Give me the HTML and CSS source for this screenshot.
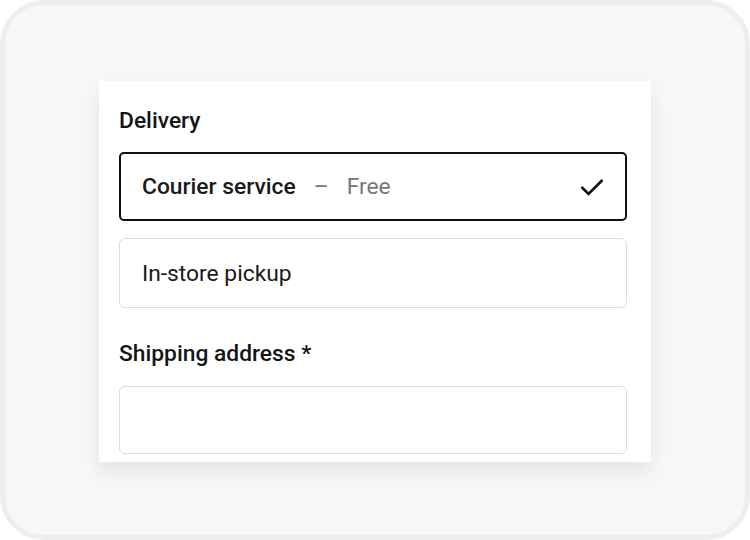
FILE: index.html
```html
<!DOCTYPE html>
<html lang="en">
<head>
    <meta charset="UTF-8">
    <title>Delivery</title>
    <link rel="stylesheet" href="styles.css">
</head>
<body>
    <div class="frame">
        <form class="card">
            <h2 class="section-title">Delivery</h2>

            <div class="options">
                <label class="option selected">
                    <span class="option-name">Courier service</span>
                    <span class="option-dash">–</span>
                    <span class="option-price">Free</span>
                    <svg class="check" viewBox="0 0 24 18" width="24" height="18">
                        <polyline points="1.5,9 8.5,16 22.5,2" fill="none" stroke="#111" stroke-width="2.6"/>
                    </svg>
                </label>
                <label class="option">
                    <span class="option-text">In-store pickup</span>
                </label>
            </div>

            <h2 class="section-title address-title">Shipping address *</h2>
            <div class="text-input"></div>
        </form>
    </div>
</body>
</html>
```

FILE: styles.css
```css
* {
    margin: 0;
    padding: 0;
    box-sizing: border-box;
}

body {
    font-family: Roboto, "Liberation Sans", sans-serif;
    background: #ffffff;
    color: #111;
}

.frame {
    width: 750px;
    height: 540px;
    border: 5px solid #eeeeee;
    border-radius: 44px;
    background: #f7f7f7;
    padding: 76px 94px 0 94px;
    overflow: hidden;
}

/* Карточка формы */
.card {
    width: 552px;
    height: 381px;
    background: #fff;
    padding: 26px 24px 0 20px;
    box-shadow: 0 10px 18px rgba(0, 0, 0, 0.08);
    overflow: hidden;
}

.section-title {
    font-size: 22.8px;
    font-weight: 500;
    line-height: 27px;
    color: #151515;
}

.options {
    display: flex;
    flex-direction: column;
    gap: 17px;
    margin-top: 18px;
}

.option {
    display: flex;
    align-items: center;
    height: 70px;
    padding: 0 22px;
    border: 1px solid #dddddd;
    border-radius: 6px;
    font-size: 22.8px;
    line-height: 27px;
    color: #1a1a1a;
}

.option.selected {
    height: 69px;
    border: 2px solid #111;
    border-radius: 5px;
    padding: 0 21px;
}

.option-name {
    font-weight: 500;
}

.option-dash {
    color: #777;
    margin: 0 18px 0 18px;
}

.option-price {
    color: #777;
}

.check {
    margin-left: auto;
}

.address-title {
    margin-top: 32px;
}

.text-input {
    height: 68px;
    margin-top: 19px;
    border: 1px solid #dddddd;
    border-radius: 6px;
}
```
